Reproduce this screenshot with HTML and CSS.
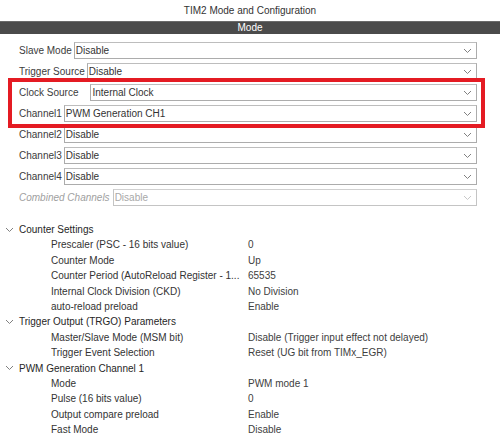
FILE: index.html
```html
<!DOCTYPE html>
<html>
<head>
<meta charset="utf-8">
<link rel="stylesheet" href="styles.css">
</head>
<body>
<div class="title">TIM2 Mode and Configuration</div>
<div class="bar">Mode</div>
<div class="form">
  <div class="row"><span class="label">Slave Mode</span><div class="select"><span class="val">Disable</span><svg class="chev" width="7" height="4" viewBox="0 0 7 4"><polyline points="0,0 3.5,3.5 7,0"/></svg></div></div>
  <div class="row"><span class="label">Trigger Source</span><div class="select"><span class="val">Disable</span><svg class="chev" width="7" height="4" viewBox="0 0 7 4"><polyline points="0,0 3.5,3.5 7,0"/></svg></div></div>
  <div class="row wide"><span class="label">Clock Source</span><div class="select"><span class="val">Internal Clock</span><svg class="chev" width="7" height="4" viewBox="0 0 7 4"><polyline points="0,0 3.5,3.5 7,0"/></svg></div></div>
  <div class="row"><span class="label">Channel1</span><div class="select"><span class="val">PWM Generation CH1</span><svg class="chev" width="7" height="4" viewBox="0 0 7 4"><polyline points="0,0 3.5,3.5 7,0"/></svg></div></div>
  <div class="row"><span class="label">Channel2</span><div class="select"><span class="val">Disable</span><svg class="chev" width="7" height="4" viewBox="0 0 7 4"><polyline points="0,0 3.5,3.5 7,0"/></svg></div></div>
  <div class="row"><span class="label">Channel3</span><div class="select"><span class="val">Disable</span><svg class="chev" width="7" height="4" viewBox="0 0 7 4"><polyline points="0,0 3.5,3.5 7,0"/></svg></div></div>
  <div class="row"><span class="label">Channel4</span><div class="select"><span class="val">Disable</span><svg class="chev" width="7" height="4" viewBox="0 0 7 4"><polyline points="0,0 3.5,3.5 7,0"/></svg></div></div>
  <div class="row disabled"><span class="label">Combined Channels</span><div class="select"><span class="val">Disable</span><svg class="chev" width="7" height="4" viewBox="0 0 7 4"><polyline points="0,0 3.5,3.5 7,0"/></svg></div></div>
</div>
<div class="tree">
  <div class="section"><svg class="tchev" width="7" height="4" viewBox="0 0 7 4"><polyline points="0,0 3.5,3.5 7,0"/></svg><span>Counter Settings</span></div>
  <div class="item"><span class="name">Prescaler (PSC - 16 bits value)</span><span class="value">0</span></div>
  <div class="item"><span class="name">Counter Mode</span><span class="value">Up</span></div>
  <div class="item"><span class="name">Counter Period (AutoReload Register - 1...</span><span class="value">65535</span></div>
  <div class="item"><span class="name">Internal Clock Division (CKD)</span><span class="value">No Division</span></div>
  <div class="item"><span class="name">auto-reload preload</span><span class="value">Enable</span></div>
  <div class="section"><svg class="tchev" width="7" height="4" viewBox="0 0 7 4"><polyline points="0,0 3.5,3.5 7,0"/></svg><span>Trigger Output (TRGO) Parameters</span></div>
  <div class="item"><span class="name">Master/Slave Mode (MSM bit)</span><span class="value">Disable (Trigger input effect not delayed)</span></div>
  <div class="item"><span class="name">Trigger Event Selection</span><span class="value">Reset (UG bit from TIMx_EGR)</span></div>
  <div class="section"><svg class="tchev" width="7" height="4" viewBox="0 0 7 4"><polyline points="0,0 3.5,3.5 7,0"/></svg><span>PWM Generation Channel 1</span></div>
  <div class="item"><span class="name">Mode</span><span class="value">PWM mode 1</span></div>
  <div class="item"><span class="name">Pulse (16 bits value)</span><span class="value">0</span></div>
  <div class="item"><span class="name">Output compare preload</span><span class="value">Enable</span></div>
  <div class="item"><span class="name">Fast Mode</span><span class="value">Disable</span></div>
</div>
<div class="highlight"></div>
</body>
</html>
```
FILE: styles.css
```css
html, body {
  margin: 0;
  padding: 0;
  background: #ffffff;
}
body {
  position: relative;
  width: 500px;
  height: 436px;
  overflow: hidden;
  font-family: "Liberation Sans", Arial, sans-serif;
  font-size: 10px;
  color: #333333;
}
.title {
  height: 21px;
  line-height: 21px;
  text-align: center;
  color: #333333;
}
.bar {
  height: 12px;
  line-height: 12px;
  border-top: 1px solid #6a6a6a;
  background: #4b4b4b;
  color: #ffffff;
  text-align: center;
}
.form {
  display: flex;
  flex-direction: column;
  gap: 4px;
  padding: 8px 23px 0 19px;
}
.row {
  display: flex;
  align-items: center;
  gap: 2px;
  height: 17px;
}
.row.wide {
  gap: 12px;
}
.label {
  white-space: nowrap;
  color: #3c3c3c;
}
.select {
  flex: 1;
  display: flex;
  align-items: center;
  height: 15px;
  border: 1px solid #acacac;
  border-top-color: #bdbdbd;
  padding: 0 5px 0 1px;
}
.val {
  flex: 1;
  color: #333333;
}
.chev {
  display: block;
}
.chev polyline, .tchev polyline {
  fill: none;
  stroke: #808080;
  stroke-width: 1;
}
.disabled .label {
  font-style: italic;
  color: #a0a0a0;
}
.disabled {
  gap: 3px;
}
.disabled .val {
  color: #a8a8a8;
}
.disabled .select {
  border-color: #c4c4c4;
  border-top-color: #d0d0d0;
}
.disabled .chev polyline {
  stroke: #c8c8c8;
}
.tree {
  margin-top: 16px;
}
.section, .item {
  height: 15.4px;
  line-height: 15.4px;
  display: flex;
  align-items: center;
  white-space: nowrap;
}
.section {
  padding-left: 6px;
  color: #262626;
}
.tchev {
  display: block;
  margin-right: 6px;
}
.item {
  padding-left: 51px;
}
.name {
  width: 197px;
  overflow: hidden;
  color: #333333;
}
.value {
  color: #404040;
}
.highlight {
  position: absolute;
  left: 8px;
  top: 78px;
  width: 469px;
  height: 42px;
  border: 4px solid #e41b23;
}
```
